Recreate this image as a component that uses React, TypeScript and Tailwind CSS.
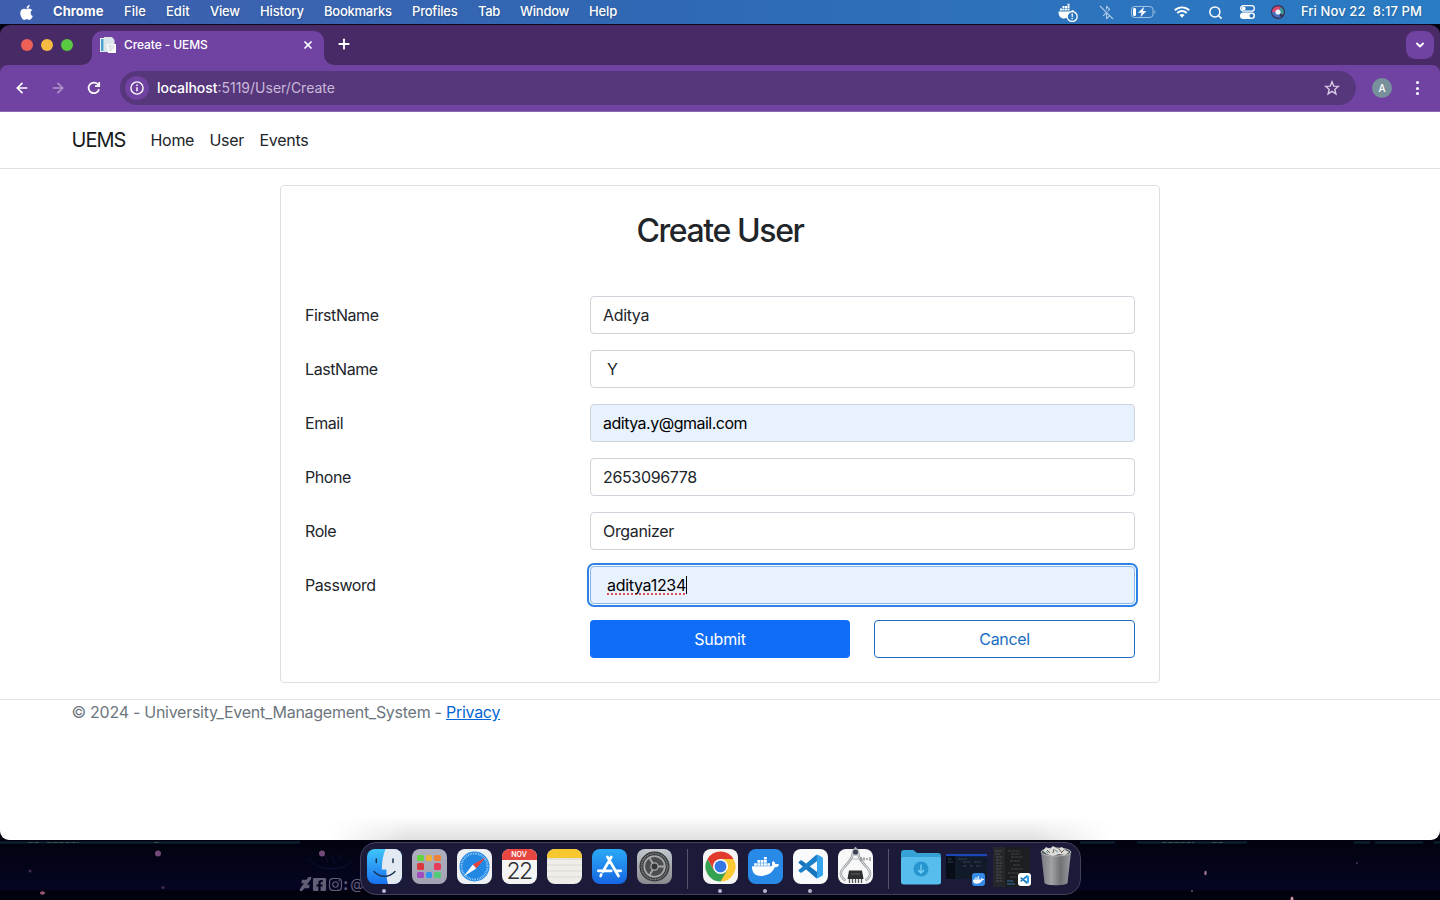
import type { ReactNode } from "react";
import { FaApple, FaDocker, FaDeviantart, FaFacebookSquare, FaInstagram } from "react-icons/fa";
import { ArrowLeft, ArrowRight, BluetoothOff, ChevronDown, Plus, Search, Star, X } from "lucide-react";

function MenuBar() {
  return (
    <header className="flex h-6 shrink-0 items-center bg-linear-to-r from-[#3f5fae] via-[#2f68b4] via-45% to-[#2a7cc4] text-[13px] font-medium text-white [text-shadow:0_1px_2px_rgb(0_0_0/0.25)]">
      <FaApple className="ml-[19px] h-[17px] w-[15px] shrink-0" />
      <nav className="ml-[19px] flex whitespace-nowrap">
        <span className="w-[71px] font-bold tracking-[0.05px]">Chrome</span>
        <span className="w-[42px]">File</span>
        <span className="w-[44px]">Edit</span>
        <span className="w-[50px] tracking-[-0.2px]">View</span>
        <span className="w-[64px] tracking-[-0.15px]">History</span>
        <span className="w-[88px] tracking-[-0.25px]">Bookmarks</span>
        <span className="w-[66px] tracking-[-0.2px]">Profiles</span>
        <span className="w-[42px] tracking-[-0.3px]">Tab</span>
        <span className="w-[69px] tracking-[-0.25px]">Window</span>
        <span className="tracking-[-0.1px]">Help</span>
      </nav>
      <div className="ml-auto flex items-center">
        <svg className="mr-[21px] h-5 w-5" viewBox="0 0 20 20" fill="white">
          <path d="M.5 9.500h12.500c.8-1.600 2-1.500 3-1-.4 1-1.200 1.500-2.200 1.600C12.500 14.500 10 16.500 6 16.500 2.500 16.500.5 14 .5 9.500Z" />
          <path d="M2 6.500h2v2H2zm2.500 0h2v2h-2zm2.500 0h2v2H7zm2.500 0h2v2h-2zM4.500 4.100h2v2h-2zm2.500 0h2v2H7zm2.500 0h2v2h-2zm0-2.400h2v2h-2z" />
          <circle cx="14.200" cy="14.500" r="5" fill="#2c78c0" stroke="white" strokeWidth="1.300" />
          <path d="M13.500 11.500h1.400l-.2 3.700h-1zM13.500 16h1.400v1.300h-1.400z" />
        </svg>
        <BluetoothOff className="mr-[17px] h-[15px] w-[15px] opacity-60" strokeWidth={1.7} />
        <svg className="mr-[18px] h-3 w-[25px]" viewBox="0 0 25 12" fill="none">
          <rect x=".5" y=".5" width="21.500" height="11" rx="3.200" stroke="white" strokeOpacity=".55" />
          <path d="M23.500 4v4c1.200-.4 1.200-3.600 0-4Z" fill="white" fillOpacity=".6" />
          <rect x="2" y="2" width="3" height="8" rx="1.200" fill="white" />
          <path d="M13.300.8 7 6.800h3.600L9.300 11.200l6.200-6.200h-3.600z" fill="white" />
        </svg>
        <svg className="mr-[18px] h-3 w-4" viewBox="0 0 16 12" fill="none" stroke="white" strokeWidth="1.900">
          <path d="M.8 4.300a10.300 10.300 0 0 1 14.400 0M3.300 7a6.700 6.700 0 0 1 9.400 0" />
          <path d="m8 11.800 2.500-2.700a3.600 3.600 0 0 0-5 0z" fill="white" stroke="none" />
        </svg>
        <Search className="mr-[17px] h-[15px] w-[15px]" strokeWidth={2.4} />
        <svg className="mr-[16px] h-[14px] w-[15px]" viewBox="0 0 15 14" fill="none">
          <rect x=".7" y=".7" width="13.600" height="5.400" rx="2.700" stroke="white" strokeWidth="1.300" />
          <circle cx="3.700" cy="3.400" r="1.900" fill="white" />
          <rect x="0" y="7.600" width="15" height="6.400" rx="3.200" fill="white" />
          <circle cx="11.500" cy="10.800" r="2" fill="#3276bd" />
        </svg>
        <svg className="mr-4 h-[14px] w-[14px]" viewBox="0 0 14 14">
          <circle cx="7" cy="7" r="7" fill="#39304f" />
          <path d="M1 7a6 6 0 0 1 9-5L7 7z" fill="#d84c72" />
          <path d="M10 2a6 6 0 0 1 2 8L7 7z" fill="#39979c" />
          <path d="M1 7c0 4 5 7 9 5L7 7z" fill="#4670bd" />
          <circle cx="7" cy="7" r="2.600" fill="#edf5fc" />
        </svg>
        <span className="mr-[18px] whitespace-pre tracking-[0.1px]">Fri Nov 22  8:17 PM</span>
      </div>
    </header>
  );
}

function TabStrip() {
  return (
    <div className="flex h-10 items-end bg-[#482b66]">
      <div className="mb-[14px] ml-[21px] flex gap-2">
        <i className="h-3 w-3 rounded-full bg-[#ee6055]" />
        <i className="h-3 w-3 rounded-full bg-[#f6bb43]" />
        <i className="h-3 w-3 rounded-full bg-[#58c940]" />
      </div>
      <svg className="ml-[9px] h-[10px] w-[10px]" viewBox="0 0 10 10">
        <path d="M10 0v10H0A10 10 0 0 0 10 0Z" fill="#7042a2" />
      </svg>
      <div className="flex h-[34px] w-[232px] items-center rounded-t-[10px] bg-[#7042a2] pr-[10px] pb-[6px] pl-2 text-white">
        <svg className="h-4 w-4 shrink-0" viewBox="0 0 16 16">
          <path d="M0 1h10v14H0z" fill="#e9f1f3" />
          <path d="M1 2h2.500v12H1z" fill="#4aa2cd" />
          <path d="M4 0h8l2.500 3v12H4z" fill="#dce5e9" />
          <path d="M6 7h10v9H8z" fill="#f8f8f8" />
          <path d="M8 9h6M9 11h5M9 13h3" stroke="#bcc6ce" strokeWidth=".8" />
        </svg>
        <span className="ml-2 text-xs font-medium tracking-[-0.1px]">Create - UEMS</span>
        <X className="ml-auto h-[12px] w-[12px]" strokeWidth={3.4} />
      </div>
      <svg className="h-[10px] w-[10px]" viewBox="0 0 10 10">
        <path d="M0 0v10h10A10 10 0 0 1 0 0Z" fill="#7042a2" />
      </svg>
      <Plus className="mb-[13px] ml-[2px] h-4 w-4 text-white" strokeWidth={2.8} />
      <div className="mr-[6px] mb-[6px] ml-auto flex h-7 w-7 items-center justify-center rounded-[9px] bg-[#7042a2] text-white">
        <ChevronDown className="h-3 w-3" strokeWidth={3.8} />
      </div>
    </div>
  );
}

function Toolbar() {
  return (
    <div className="bg-[#482b66]">
      <div className="flex h-[47px] items-center rounded-t-[8px] border-b border-[#8b68b2] bg-[#7042a2] text-white">
        <ArrowLeft className="ml-[14px] h-4 w-4" strokeWidth={2.5} />
        <ArrowRight className="ml-5 h-4 w-4 opacity-45" strokeWidth={2.4} />
        <svg className="ml-[21px] h-[14px] w-[14px]" viewBox="0 0 14 14" fill="none" stroke="white" strokeWidth="1.700">
          <path d="M12 8.200A5.300 5.300 0 1 1 10.800 3.300L12.200 4.700" />
          <path d="M12.200 1v4.200H8" />
        </svg>
        <div className="ml-[19px] flex h-[34px] w-[1236px] items-center rounded-full bg-[#57377c] pr-4 pl-[5px]">
          <div className="flex h-6 w-6 items-center justify-center rounded-full bg-[#7042a2]">
            <svg className="h-[14px] w-[14px]" viewBox="0 0 14 14" fill="none">
              <circle cx="7" cy="7" r="6.100" stroke="white" strokeWidth="1.400" />
              <path d="M7 6.200v4M7 3.500v1.400" stroke="white" strokeWidth="1.500" />
            </svg>
          </div>
          <span className="ml-[8px] text-sm text-[#c9b9d9]">
            <span className="font-medium tracking-[-0.05px] text-white">localhost</span>:5119/User/Create
          </span>
          <svg className="ml-auto h-4 w-4" viewBox="0 0 16 16" fill="none" stroke="#d8c9e6" strokeWidth="1.400">
            <path d="m8 1.800 1.700 4.300 4.600.3-3.500 3 1.100 4.500L8 11.400l-3.900 2.500 1.100-4.500-3.500-3 4.600-.3z" />
          </svg>
        </div>
        <span className="ml-4 flex h-5 w-5 items-center justify-center rounded-full bg-[#78909c] text-[10px] font-medium">A</span>
        <div className="ml-[24px] flex flex-col gap-[2.500px]">
          <i className="h-[3px] w-[3px] rounded-full bg-white" />
          <i className="h-[3px] w-[3px] rounded-full bg-white" />
          <i className="h-[3px] w-[3px] rounded-full bg-white" />
        </div>
      </div>
    </div>
  );
}

type Field = { label: string; value: string; autofilled?: boolean; focused?: boolean; indent?: boolean };

const fields: Field[] = [
  { label: "FirstName", value: "Aditya" },
  { label: "LastName", value: "Y", indent: true },
  { label: "Email", value: "aditya.y@gmail.com", autofilled: true },
  { label: "Phone", value: "2653096778" },
  { label: "Role", value: "Organizer" },
  { label: "Password", value: "aditya1234", focused: true, indent: true },
];

function FieldRow({ field }: { field: Field }) {
  const box = field.focused
    ? "border-[#86b7e8] bg-[#e8f1fe] tracking-[-0.3px] text-black outline-[2.500px] outline-offset-[1.500px] outline-[#2d82e4]"
    : field.autofilled
      ? "border-[#ced4da] bg-[#e8f1fe] tracking-[-0.5px] text-black"
      : "border-[#ced4da] bg-white tracking-[-0.35px]";
  return (
    <div className="mb-4 flex h-[38px] items-center">
      <label className="w-[285px] tracking-[-0.42px]">{field.label}</label>
      <div className={`flex h-[38px] w-[545px] items-center rounded-[4px] border ${field.indent ? "pl-4" : "pl-3"} ${box}`}>
        {field.focused ? (
          <>
            <span className="underline decoration-[#e0494f] decoration-dotted decoration-2 underline-offset-2 [text-decoration-skip-ink:none]">{field.value}</span>
            <i className="h-[18px] w-px bg-black" />
          </>
        ) : (
          field.value
        )}
      </div>
    </div>
  );
}

function Page() {
  return (
    <div className="flex flex-1 flex-col bg-white text-base text-[#212529]">
      <nav className="flex h-[57px] items-center border-b border-[#dee2e6] pl-[71.500px]">
        <span className="w-[79px] text-xl tracking-[-0.95px] text-[#18191b]">UEMS</span>
        <span className="w-[59px] tracking-[-0.3px]">Home</span>
        <span className="w-[50px] tracking-[-0.3px]">User</span>
        <span className="tracking-[-0.3px]">Events</span>
      </nav>
      <main className="mx-auto mt-4 h-[498px] w-[880px] rounded-[4px] border border-[#dfdfdf] px-6 pt-[25px]">
        <h1 className="mb-[45px] text-center text-[32px] leading-10 font-medium tracking-[-1.4px]">Create User</h1>
        {fields.map((f) => (
          <FieldRow key={f.label} field={f} />
        ))}
        <div className="ml-[285px] flex gap-6 tracking-[-0.2px]">
          <button className="h-[38px] w-[260px] rounded-[4px] bg-[#0f6df8] text-white">Submit</button>
          <button className="h-[38px] w-[261px] rounded-[4px] border border-[#1b6ec2] tracking-[-0.35px] text-[#1b6ec2]">Cancel</button>
        </div>
      </main>
      <footer className="mt-4 border-t border-[#dee2e6] pl-[71.500px] tracking-[-0.27px] text-[#6c757d]">
        © 2024 - University_Event_Management_System - <a className="text-[#0366d6] underline">Privacy</a>
      </footer>
      <div className="mx-auto mt-auto h-6 w-[780px] bg-linear-to-b from-transparent to-black/12 mask-x-from-90% mask-x-to-100%" />
    </div>
  );
}

function DockItem({ children, running }: { children: ReactNode; running?: boolean }) {
  return (
    <div className="flex w-[35px] shrink-0 flex-col items-center">
      {children}
      {running && <i className="mt-[5px] h-1 w-1 rounded-full bg-[#b9b6cb]" />}
    </div>
  );
}

const tile = "h-[35px] w-[35px] rounded-[8px]";

function Finder() {
  return (
    <svg className={tile} viewBox="0 0 35 35">
      <defs>
        <linearGradient id="finder" x2="0" y2="1">
          <stop stopColor="#3fc5fb" />
          <stop offset="1" stopColor="#1870ee" />
        </linearGradient>
      </defs>
      <path d="M0 0h35v35H0z" fill="url(#finder)" />
      <path d="M18.500 0C16 6 14.800 13 14.800 20.500h4.700c-.2 6 .3 10.500 1.500 14.500h14V0Z" fill="#e3e9f1" />
      <path d="M9.300 10v3.500M26 10v3.500" stroke="#17334f" strokeWidth="1.500" strokeLinecap="round" />
      <path d="M7 22.500c6 6.500 15 6.500 21 0" fill="none" stroke="#17334f" strokeWidth="1.400" strokeLinecap="round" />
    </svg>
  );
}

const launchColors = ["#62d63d", "#f2b137", "#ed8338", "#d8373c", "#a4adb8", "#e83b5c", "#a24bc1", "#2f95ef", "#4fcc74"];

function Launchpad() {
  return (
    <div className={`${tile} grid grid-cols-[repeat(3,6.500px)] content-center justify-center gap-[2px] bg-linear-to-b from-[#aeb0bf] to-[#a2a3b2]`}>
      {launchColors.map((c) => (
        <i key={c} className="h-[6.500px] w-[6.500px] rounded-[1.500px]" style={{ backgroundColor: c }} />
      ))}
    </div>
  );
}

function Safari() {
  return (
    <svg className={tile} viewBox="0 0 35 35">
      <path d="M0 0h35v35H0z" fill="#edf0f3" />
      <circle cx="17.500" cy="17.500" r="15" fill="#2387e4" />
      <circle cx="17.500" cy="17.500" r="13" fill="none" stroke="#c9e9ff" strokeWidth="2" strokeDasharray=".6 1.100" />
      <path d="M28.500 8.500 15.800 15.600l3.600 3.800z" fill="#e9453f" />
      <path d="M6.500 27.500 15.800 15.600l3.600 3.800z" fill="#f4f7fa" />
    </svg>
  );
}

function Calendar() {
  return (
    <div className={`${tile} overflow-hidden bg-[#f5f4f5] text-center`}>
      <div className="h-[11px] bg-[#e74740] text-[7px] leading-[12px] font-semibold text-white">NOV</div>
      <div className="text-[23px] leading-[23px] font-light tracking-[-1.500px] text-[#303034]">22</div>
    </div>
  );
}

function Notes() {
  return (
    <svg className={tile} viewBox="0 0 35 35">
      <path d="M0 0h35v35H0z" fill="#efede9" />
      <path d="M0 0h35v9H0z" fill="#f6c72f" />
      <path d="M0 10h35" stroke="#aaa48e" strokeWidth=".7" strokeDasharray=".7 .8" />
      <path d="M0 16h35M0 22h35M0 28h35" stroke="#d4d1cb" strokeWidth=".7" />
    </svg>
  );
}

function AppStore() {
  return (
    <svg className={tile} viewBox="0 0 35 35">
      <defs>
        <linearGradient id="store" x2="0" y2="1">
          <stop stopColor="#2ba9f7" />
          <stop offset="1" stopColor="#1667e2" />
        </linearGradient>
      </defs>
      <path d="M0 0h35v35H0z" fill="url(#store)" />
      <g stroke="white" strokeWidth="2.700" strokeLinecap="round">
        <path d="m19.300 8-8.300 14.500M9.300 25.500 8.600 27M15.500 8l11 19M6.300 21.800h13M24.300 21.800h4.500" />
      </g>
    </svg>
  );
}

function Settings() {
  return (
    <svg className={tile} viewBox="0 0 35 35" fill="none">
      <defs>
        <linearGradient id="metal" x2="0" y2="1">
          <stop stopColor="#c2c8ce" />
          <stop offset="1" stopColor="#888a8c" />
        </linearGradient>
      </defs>
      <path d="M0 0h35v35H0z" fill="url(#metal)" />
      <circle cx="17.500" cy="17.500" r="15" fill="#343638" />
      <circle cx="17.500" cy="17.500" r="13" stroke="#85888a" strokeWidth="1.600" strokeDasharray="1 .7" />
      <circle cx="17.500" cy="17.500" r="10.300" fill="#4b4e50" stroke="#a5a8a9" strokeWidth="1.800" />
      <path d="M17.500 17.500h10.300M17.500 17.500 12.400 8.500M17.500 17.500l-5.100 9" stroke="#a5a8a9" strokeWidth="1.800" />
      <circle cx="17.500" cy="17.500" r="3.600" fill="#333638" stroke="#a5a8a9" strokeWidth="1.300" />
    </svg>
  );
}

function Chrome() {
  return (
    <svg className={tile} viewBox="0 0 35 35">
      <path d="M0 0h35v35H0z" fill="#f5f5f5" />
      <path d="M17.500 17.500 4.500 10A15 15 0 0 1 30.500 10Z" fill="#e23b2e" />
      <path d="M17.500 17.500V10h13A15 15 0 0 1 17.500 32.500Z" fill="#fbc934" />
      <path d="M4.500 10A15 15 0 0 0 17.500 32.500L24 21.250 17.500 17.500 11 21.250Z" fill="#33a352" />
      <path d="M4.500 10 11 21.250 17.500 10Z" fill="#e23b2e" />
      <circle cx="17.500" cy="17.500" r="7.500" fill="white" />
      <circle cx="17.500" cy="17.500" r="5.900" fill="#3478e5" />
    </svg>
  );
}

function CodeMark({ className }: { className: string }) {
  return (
    <svg className={className} viewBox="0 0 24 24">
      <path d="m.6 7.700 1.700-1.500q.7-.5 1.400 0L19 17.800v5.100q-1 .7-2-.2L.7 8.700q-.5-.5-.1-1" fill="#1575bd" />
      <path d="m.6 16.300 1.700 1.500q.7.500 1.400 0L19 6.200V1.100q-1-.7-2 .2L.7 15.300q-.5.500-.1 1" fill="#1b80c9" />
      <path d="M17 22.900q1 .7 2 .3l4-2q1-.5 1-1.600V4.400q0-1.100-1-1.600l-4-2q-1-.4-2 .3 1.200-.3 1.200.9v20q0 1.200-1.200.9" fill="#35a4ec" />
    </svg>
  );
}

function SystemInfo() {
  return (
    <svg className="-mt-[3px] h-[38px] w-[35px]" viewBox="0 0 35 38" fill="none">
      <rect y="3" width="35" height="35" rx="8" fill="#f8f8f8" />
      <path d="M15 7C14 14 10 17 5.500 22 1.500 26.500 2 31 7.500 34.500M20 7c1 7 5 10 9.500 15 4 4.500 3.500 9-2 12.500" stroke="#8e9396" strokeWidth="2.400" />
      <path d="M15 7C14 14 10 17 5.500 22 1.500 26.500 2 31 7.500 34.500M20 7c1 7 5 10 9.500 15 4 4.500 3.500 9-2 12.500" stroke="#d5d8da" strokeWidth="1.200" />
      <path d="M17.500 1v3" stroke="#b6bac0" strokeWidth="1.500" />
      <circle cx="17.500" cy="6" r="3.200" fill="#3c4253" stroke="#bfc3c8" strokeWidth="1.200" />
      <path d="M12 13h15" stroke="#b5b9bc" strokeWidth="1" />
      <path d="M23 11v4M26 11.500v3M29 12v2M32 11v4" stroke="#85898c" strokeWidth="1.300" />
      <path d="M11 24.500h13l1.500 8.500h-16z" fill="#2d2f31" />
      <path d="M13 28h9" stroke="#5e6164" />
      <path d="M11.500 33v4M14.500 33v4M17.500 33v4M20.500 33v4M23.500 33v4" stroke="#55585a" strokeWidth="1.300" />
    </svg>
  );
}

function Folder() {
  return (
    <svg className="mt-px h-[35px] w-10 shrink-0" viewBox="0 0 40 35">
      <path d="M0 3q0-3 3-3h9c2 0 2 3 5 3h20q3 0 3 3v8H0z" fill="#35a1d4" />
      <path d="M0 9q0-2 2-2h36q2 0 2 2v23q0 2.500-3 2.500H3q-3 0-3-2.500z" fill="#57bdec" />
      <circle cx="20" cy="19" r="7.500" fill="#2796ce" />
      <path d="M20 14.500v8.500m-3-3 3 3 3-3" fill="none" stroke="#78d1fa" strokeWidth="1.300" />
    </svg>
  );
}

function DockerWindow() {
  return (
    <div className="relative mt-[5px] ml-[5px] h-[25px] w-[41px] shrink-0">
      <svg className="h-[25px] w-[41px]" viewBox="0 0 41 25">
        <path d="M0 0h41v25H0z" fill="#111a29" />
        <path d="M0 0h41v2.200H0z" fill="#1c45b8" />
        <path d="M0 2.200h9V25H0z" fill="#080e18" />
        <path d="M2 5h4M2 8h5M12 5h9M17 8h8M28 8h7M17 12h4M24 12h3M30 12h5" stroke="#536277" strokeWidth=".6" strokeDasharray="3 .6" />
      </svg>
      <div className="absolute top-[19px] left-[26px] flex h-[13px] w-[13px] items-center justify-center rounded-[3px] bg-[#348be8] text-white">
        <FaDocker className="h-[10px] w-[11px]" />
      </div>
    </div>
  );
}

function CodeWindow() {
  return (
    <div className="relative -mt-[2px] ml-[6px] h-10 w-[37px] shrink-0">
      <svg className="h-10 w-[37px]" viewBox="0 0 37 40">
        <path d="M0 0h37v40H0z" fill="#1c1f22" />
        <path d="M0 0h12v40H0z" fill="#25282b" />
        <path d="M2 4h7M2 7h5M3 10h7M3 13h5M3 16h7M3 19h6M3 22h5M3 25h7M3 28h5M3 31h6M3 34h7" stroke="#656c70" strokeWidth=".6" strokeDasharray="3 .5" />
        <path d="M15 4h12M18 7h9M18 10h12M17 14h10M20 18h7M18 22h12M15 26h10M17 30h7" stroke="#62574f" strokeWidth=".7" strokeDasharray="3 .7" />
        <path d="M14 34h6M14 37h8" stroke="#34709e" />
      </svg>
      <div className="absolute top-[26px] left-[25px] flex h-[13px] w-[13px] items-center justify-center rounded-[3px] bg-white">
        <CodeMark className="h-[9px] w-[9px]" />
      </div>
    </div>
  );
}

function Trash() {
  return (
    <svg className="-mt-[3px] ml-[10px] h-10 w-[32px] shrink-0" viewBox="0 0 32 40">
      <defs>
        <linearGradient id="can">
          <stop stopColor="#777a7e" />
          <stop offset=".35" stopColor="#a0a2a4" />
          <stop offset=".65" stopColor="#707375" />
          <stop offset="1" stopColor="#9a9d9f" />
        </linearGradient>
      </defs>
      <path d="m1 6 3.500 31c1 3 22 3 23 0L31 6z" fill="url(#can)" />
      <ellipse cx="16" cy="6" rx="15" ry="4" fill="#505357" stroke="#b8bdc1" />
      <path d="m3 5 3-4 4 2 3-3 5 3 4-2 3 3 4 2-4 3-6-1-6 2-6-2z" fill="#dddcd8" />
      <path d="m7 4 3 3M14 3l-1 4M19 3l3 4M24 4l-2 2" stroke="#66594f" />
      <path d="m15 4 3 2M6 5l2 2" stroke="#4d93a0" />
    </svg>
  );
}

function Dock() {
  return (
    <div className="flex h-[53px] w-[721px] shrink-0 items-start rounded-[16px] border border-[#42425d] bg-[#1b1a38] pt-[6px] pl-[6px]">
      <div className="flex gap-[10px]">
        <DockItem running><Finder /></DockItem>
        <DockItem><Launchpad /></DockItem>
        <DockItem><Safari /></DockItem>
        <DockItem><Calendar /></DockItem>
        <DockItem><Notes /></DockItem>
        <DockItem><AppStore /></DockItem>
        <DockItem><Settings /></DockItem>
      </div>
      <i className="mr-[15px] ml-[15px] h-10 w-px bg-[#55546b]" />
      <div className="flex gap-[10px]">
        <DockItem running><Chrome /></DockItem>
        <DockItem running>
          <div className={`${tile} flex items-center justify-center bg-[#2989e7] text-white`}>
            <FaDocker className="h-[27px] w-[27px]" />
          </div>
        </DockItem>
        <DockItem running>
          <div className={`${tile} flex items-center justify-center bg-[#f8fafc]`}>
            <CodeMark className="h-[25px] w-[25px]" />
          </div>
        </DockItem>
        <DockItem><SystemInfo /></DockItem>
      </div>
      <i className="mr-[12px] ml-[15px] h-10 w-px bg-[#55546b]" />
      <Folder />
      <DockerWindow />
      <CodeWindow />
      <Trash />
    </div>
  );
}

function Desktop() {
  return (
    <div className="relative flex h-[60px] shrink-0 justify-center bg-linear-to-b from-[#02030f] via-[#050523] via-80% to-[#02020e] pt-[2px]">
      <svg className="absolute inset-0 h-[60px] w-full" viewBox="0 0 1440 60">
        <path d="M0 50h1440v10H0z" fill="#02020e" />
        <path d="M0 2.500h300M1080 2.500h35M1137 2.500h110M1354 2.500h16M1375 2.500h48M1434 2.500h6" stroke="#0c2236" strokeWidth="2" />
        <path d="M28 2.500h12M47 2.500h32M154 2.500h6M1162 2.500h32M1212 2.500h12" stroke="#3b4b4c" strokeDasharray="5 1" />
        <g fill="#744979">
          <circle cx="158" cy="13.500" r="3" />
          <circle cx="322" cy="13.500" r="3" />
          <ellipse cx="42.500" cy="53" rx="2.500" ry="1.800" fill="#985a73" />
          <ellipse cx="1205.500" cy="33" rx="1.200" ry="2.300" fill="#a47698" />
          <ellipse cx="1292" cy="59" rx="1.500" ry="2.500" fill="#ca8fa2" />
          <circle cx="30" cy="31" r="1.500" opacity=".6" />
          <circle cx="163" cy="47.500" r="1.500" opacity=".6" />
          <circle cx="1192" cy="51" r="1" />
          <circle cx="1357" cy="23" r="1" opacity=".7" />
        </g>
        <path d="M308 18c7 12 33 15 45 3M325 16l3 6M332 16l3 8M338 15l3 5" stroke="#0d1033" fill="none" />
      </svg>
      <div className="absolute top-[36px] left-[300px] flex items-center text-[16px] leading-4 text-[#625e76]">
        <FaDeviantart className="h-[14px] w-[11px] -skew-x-12" />
        <FaFacebookSquare className="ml-px h-[15px] w-[15px]" />
        <FaInstagram className="ml-px h-[15px] w-[15px]" />
        <span className="font-bold">:</span>
        <span className="ml-[2px] text-[14px]">@</span>
      </div>
      <div className="relative"><Dock /></div>
    </div>
  );
}

export default function App() {
  return (
    <div className="flex h-[900px] w-[1440px] flex-col overflow-hidden bg-[#02030f] font-['Inter',sans-serif]">
      <MenuBar />
      <div className="flex min-h-0 flex-1 flex-col overflow-hidden rounded-t-[10px] rounded-b-[9px] border-t border-[#0e0717]">
        <TabStrip />
        <Toolbar />
        <Page />
      </div>
      <Desktop />
    </div>
  );
}
